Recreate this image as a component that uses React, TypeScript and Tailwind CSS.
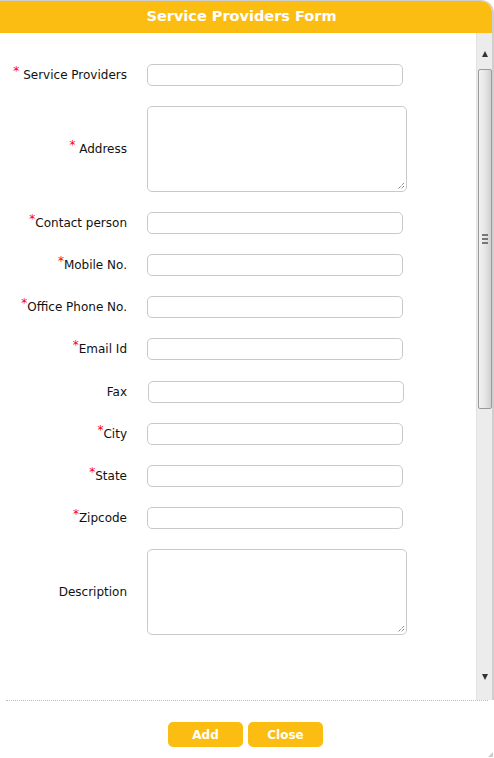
import React from "react";

// Form rows: label, required flag, field type
const fields = [
  { label: "Service Providers", required: true, spaced: true, area: false, shift: false },
  { label: "Address", required: true, spaced: true, area: true, shift: false },
  { label: "Contact person", required: true, spaced: false, area: false, shift: false },
  { label: "Mobile No.", required: true, spaced: false, area: false, shift: false },
  { label: "Office Phone No.", required: true, spaced: false, area: false, shift: false },
  { label: "Email Id", required: true, spaced: false, area: false, shift: false },
  { label: "Fax", required: false, spaced: false, area: false, shift: true },
  { label: "City", required: true, spaced: false, area: false, shift: false },
  { label: "State", required: true, spaced: false, area: false, shift: false },
  { label: "Zipcode", required: true, spaced: false, area: false, shift: false },
  { label: "Description", required: false, spaced: false, area: true, shift: false },
];

const Scrollbar = (): React.ReactElement => (
  <div className="w-[16px] h-full bg-[#ececec] border-l border-[#e2e2e2] flex flex-col items-center">
    <div className="h-[36px] w-full flex items-end justify-center pb-[11px]">
      <svg width="8" height="7" viewBox="0 0 8 7">
        <path d="M4 0 L7 6 L1 6 Z" fill="#333" />
      </svg>
    </div>
    <div className="w-[14px] h-[340px] rounded-[2px] border border-[#9a9a9a] bg-gradient-to-r from-[#f2f2f2] via-[#e6e6e6] to-[#d0d0d0] flex flex-col items-center justify-center gap-[2px]">
      <div className="w-[6px] h-[2px] bg-[#777]" />
      <div className="w-[6px] h-[2px] bg-[#777]" />
      <div className="w-[6px] h-[2px] bg-[#777]" />
    </div>
    <div className="flex-1" />
    <div className="h-[30px] w-full flex items-start justify-center pt-[4px]">
      <svg width="8" height="7" viewBox="0 0 8 7">
        <path d="M1 0 L7 0 L4 6 Z" fill="#333" />
      </svg>
    </div>
  </div>
);

export default function App(): React.ReactElement {
  return (
    <div className="w-[494px] h-[758px] bg-white relative font-['DejaVu_Sans',sans-serif] text-[12px] text-[#111]">
      <div className="w-[494px] h-[700px] flex flex-col border-r-2 border-t border-[#cfcfcf] rounded-tr-[13px] overflow-hidden">
        {/* Title bar */}
        <div className="h-[32px] bg-[#fcbd13] flex items-center justify-center text-white font-bold text-[14.5px] pr-[9px]">
          Service Providers Form
        </div>

        <div className="flex-1 flex">
          {/* Form body */}
          <div className="flex-1 pt-[31px] flex flex-col gap-[20px]">
            {fields.map((f) => (
              <div key={f.label} className={f.shift ? "flex items-center mt-[1px]" : "flex items-center"}>
                <div className="w-[127px] text-right whitespace-nowrap">
                  {f.required && (
                    <span className="text-[#f00] relative top-[-4px]">*</span>
                  )}
                  {f.spaced && " "}
                  {f.label}
                </div>
                <div className={f.shift ? "ml-[21px]" : "ml-[20px]"}>
                  {f.area ? (
                    <div className="w-[260px] h-[86px] border border-[#c9c9c9] rounded-[5px] relative">
                      <svg className="absolute right-[1px] bottom-[1px]" width="9" height="9" viewBox="0 0 9 9">
                        <path d="M8 2 L2 8 M8 5 L5 8" stroke="#555" strokeWidth="1" strokeDasharray="1 1" />
                      </svg>
                    </div>
                  ) : (
                    <div className="w-[256px] h-[22px] border border-[#c9c9c9] rounded-[5px]" />
                  )}
                </div>
              </div>
            ))}
          </div>
          <Scrollbar />
        </div>
      </div>

      {/* Footer */}
      <div className="mx-[6px] border-t border-dotted border-[#bdbdbd]" />
      <div className="flex justify-center gap-[5px] pt-[21px] pr-[3px]">
        <button className="w-[75px] h-[25px] bg-[#fcbd13] rounded-[5px] text-white font-bold text-[12px]">
          Add
        </button>
        <button className="w-[75px] h-[25px] bg-[#fcbd13] rounded-[5px] text-white font-bold text-[12px]">
          Close
        </button>
      </div>
      <svg className="absolute right-[1px] bottom-[1px]" width="5" height="5" viewBox="0 0 5 5">
        <path d="M5 0 L5 5 L0 5 Z" fill="#ccc" />
      </svg>
    </div>
  );
}
